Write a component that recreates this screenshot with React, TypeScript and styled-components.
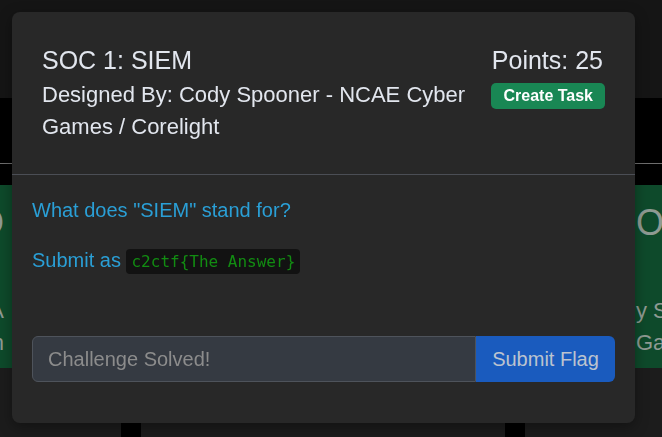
import React from "react";
import styled, { createGlobalStyle } from "styled-components";

const GlobalStyle = createGlobalStyle`
  html, body { margin: 0; padding: 0; }
  body {
    background: #1c1c1c;
    font-family: "Liberation Sans", Arial, sans-serif;
    overflow: hidden;
    width: 662px;
    height: 437px;
  }
`;

const Page = styled.div`
  display: flex;
  flex-direction: column;
  width: 662px;
  height: 437px;
  overflow: hidden;
`;

const TopNav = styled.div`
  height: 98px;
  background: #151515;
  flex-shrink: 0;
`;

const Band = styled.div`
  height: 87px;
  background: #000;
  padding-top: 65px;
  box-sizing: border-box;
  flex-shrink: 0;
`;

const Rule = styled.div`
  height: 1px;
  background: #6e6e6e;
`;

const CardRow = styled.div`
  display: grid;
  grid-template-columns: 360px 552px 360px;
  gap: 24px;
  margin-left: -340px;
  height: 183px;
  flex-shrink: 0;
`;

const Card = styled.div<{ $align: string }>`
  background: #0e4a2b;
  color: #8f9a93;
  padding: 14px 16px;
  box-sizing: border-box;
  display: flex;
  flex-direction: column;
  align-items: ${(p) => p.$align};
  text-align: ${(p) => (p.$align === "flex-start" ? "left" : "right")};
  overflow: hidden;
`;

const CardTitle = styled.div`
  font-size: 36px;
  line-height: 48px;
  margin-bottom: 48px;
  white-space: nowrap;
`;

const CardLine = styled.div`
  font-size: 22px;
  line-height: 32px;
  white-space: nowrap;
`;

const Lower = styled.div`
  flex: 1;
  background: #1c1c1c;
  display: flex;
  align-items: flex-end;
`;

const Pillars = styled.div`
  display: flex;
  height: 15px;
  width: 100%;
  padding-left: 121px;
  gap: 364px;
  box-sizing: border-box;
`;

const Pillar = styled.div`
  width: 20px;
  background: #000;
`;

const Overlay = styled.div`
  position: fixed;
  inset: 0;
  padding: 12px 0 0 12px;
  display: flex;
  align-items: flex-start;
`;

const Modal = styled.div`
  width: 623px;
  background: #282828;
  border-radius: 8px;
  box-shadow: 0 4px 14px rgba(0, 0, 0, 0.35);
  display: flex;
  flex-direction: column;
  color: #e2e6ee;
`;

const Header = styled.div`
  display: flex;
  justify-content: space-between;
  gap: 16px;
  padding: 34px 30px 31px 30px;
  border-bottom: 1px solid #4b4e55;
`;

const HeaderLeft = styled.div`
  flex: 1;
  min-width: 0;
`;

const Title = styled.div`
  font-size: 25px;
  line-height: 29px;
`;

const Subtitle = styled.div`
  font-size: 22px;
  line-height: 32px;
  margin-top: 4px;
`;

const HeaderRight = styled.div`
  display: flex;
  flex-direction: column;
  align-items: flex-end;
  flex-shrink: 0;
`;

const Points = styled.div`
  font-size: 25px;
  line-height: 29px;
  margin-right: 2px;
`;

const TaskButton = styled.button`
  margin-top: 8px;
  background: #198754;
  color: #fff;
  border: none;
  border-radius: 5px;
  font-family: "Liberation Sans", Arial, sans-serif;
  font-weight: bold;
  font-size: 16px;
  height: 26px;
  padding: 0 12px;
`;

const Body = styled.div`
  padding: 20px 20px 0 20px;
`;

const Para = styled.p`
  margin: 0 0 20px 0;
  font-size: 20px;
  line-height: 30px;
  color: #2a9fd6;
`;

const Code = styled.code`
  font-family: "DejaVu Sans Mono", "Liberation Mono", monospace;
  font-size: 16px;
  color: #128c12;
  background: #121212;
  padding: 3px 5px;
  border-radius: 4px;
`;

const Footer = styled.div`
  padding: 39px 20px 41px 20px;
`;

const InputGroup = styled.div`
  display: flex;
  height: 46px;
`;

const FlagInput = styled.input`
  flex: 1;
  min-width: 0;
  background: #353a42;
  border: 1px solid #4e535b;
  border-radius: 6px 0 0 6px;
  color: #e4e7ee;
  font-family: "Liberation Sans", Arial, sans-serif;
  font-size: 20px;
  padding: 0 15px;
  outline: none;
  &::placeholder { color: #8c8c8c; }
`;

const SubmitButton = styled.button`
  width: 139px;
  background: #1a5bbe;
  color: #bcc3cf;
  border: none;
  border-radius: 0 6px 6px 0;
  font-family: "Liberation Sans", Arial, sans-serif;
  font-size: 20px;
`;

export default function App() {
  return (
    <>
      <GlobalStyle />
      <Page>
        <TopNav />
        <Band>
          <Rule />
        </Band>
        <CardRow>
          <Card $align="flex-end">
            <CardTitle>SOC 0: SO</CardTitle>
            <CardLine>Cody Spooner - NCA</CardLine>
            <CardLine>Games / Coreligh</CardLine>
          </Card>
          <Card $align="flex-start">
            <CardTitle>SOC 1: SIEM</CardTitle>
            <CardLine>Designed By: Cody Spooner</CardLine>
            <CardLine>Games / Corelight</CardLine>
          </Card>
          <Card $align="flex-start">
            <CardTitle>OC 2</CardTitle>
            <CardLine>y Spooner</CardLine>
            <CardLine>Games / Corelight</CardLine>
          </Card>
        </CardRow>
        <Lower>
          <Pillars>
            <Pillar />
            <Pillar />
          </Pillars>
        </Lower>
      </Page>
      <Overlay>
        <Modal>
          <Header>
            <HeaderLeft>
              <Title>SOC 1: SIEM</Title>
              <Subtitle>Designed By: Cody Spooner - NCAE Cyber Games / Corelight</Subtitle>
            </HeaderLeft>
            <HeaderRight>
              <Points>Points: 25</Points>
              <TaskButton>Create Task</TaskButton>
            </HeaderRight>
          </Header>
          <Body>
            <Para>What does "SIEM" stand for?</Para>
            <Para>
              Submit as <Code>c2ctf{"{"}The Answer{"}"}</Code>
            </Para>
          </Body>
          <Footer>
            <InputGroup>
              <FlagInput placeholder="Challenge Solved!" />
              <SubmitButton>Submit Flag</SubmitButton>
            </InputGroup>
          </Footer>
        </Modal>
      </Overlay>
    </>
  );
}
